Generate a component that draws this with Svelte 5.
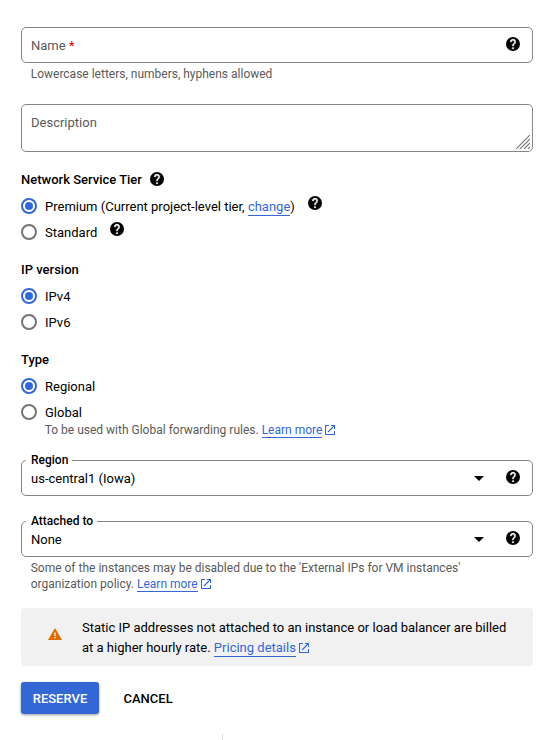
<script>
  let tier = $state('premium');
  let version = $state('IPv4');
  let type = $state('Regional');
</script>

{#snippet help(cls)}
  <svg class="help {cls}" viewBox="2 2 20 20" aria-label="Help">
    <circle cx="12" cy="12" r="10" />
    <path d="M11 17h2v2h-2zM15.070 11.250l-.9.920C13.450 12.900 13 13.500 13 15h-2v-.5c0-1.100.45-2.100 1.170-2.830l1.240-1.260c.37-.36.590-.86.590-1.410 0-1.100-.9-2-2-2s-2 .9-2 2H8c0-2.210 1.790-4 4-4s4 1.790 4 4c0 .88-.36 1.680-.93 2.250z" fill="#fff" stroke="#fff" stroke-width=".5" />
  </svg>
{/snippet}

{#snippet external()}
  <svg class="ext" viewBox="0 0 10 10"><path d="M4 .5H.5v9h9V6M6 .5h3.500V4M9.500.5L3 7" /></svg>
{/snippet}

{#snippet radio(on)}
  <span class="radio" class:on></span>
{/snippet}

<form class="page">
  <div class="box name">
    <span class="placeholder">Name <b>*</b></span>
    {@render help('')}
  </div>
  <div class="hint">Lowercase letters, numbers, hyphens allowed</div>

  <div class="box description">
    <span class="placeholder">Description</span>
    <svg class="grip" viewBox="0 0 14 14"><path d="M0 14L14 0M4 14L14 4M8 14l6-6M12 14l2-2" /></svg>
  </div>

  <section class="first">
    <h3>Network Service Tier {@render help('title-help')}</h3>
    <div class="option">{@render radio(tier === 'premium')}<span>Premium (Current project-level tier, <span class="link">change</span>)</span>{@render help('premium-help')}</div>
    <div class="option">{@render radio(tier === 'standard')}<span>Standard</span>{@render help('standard-help')}</div>
  </section>

  <section>
    <h3>IP version</h3>
    {#each ['IPv4', 'IPv6'] as v}
      <div class="option">{@render radio(version === v)}<span>{v}</span></div>
    {/each}
  </section>

  <section>
    <h3>Type</h3>
    {#each ['Regional', 'Global'] as t}
      <div class="option">{@render radio(type === t)}<span>{t}</span></div>
    {/each}
  </section>
  <div class="hint sub">To be used with Global forwarding rules. <span class="link">Learn more</span>{@render external()}</div>

  <div class="box select region">
    <span class="label">Region</span>
    <span class="value">us-central1 (Iowa)</span>
    <svg class="arrow" viewBox="0 0 10 5"><path d="M0 0h10L5 5z" /></svg>
    {@render help('')}
  </div>

  <div class="box select attached">
    <span class="label">Attached to</span>
    <span class="value">None</span>
    <svg class="arrow" viewBox="0 0 10 5"><path d="M0 0h10L5 5z" /></svg>
    {@render help('')}
  </div>
  <div class="hint policy">Some of the instances may be disabled due to the 'External IPs for VM instances'<br />organization policy. <span class="link">Learn more</span>{@render external()}</div>

  <div class="notice">
    <svg class="warn" viewBox="0 0 14 12"><path d="M7 0l7 12H0z" fill="#e06c00" /><path d="M6.300 4.500h1.400v3.500H6.300zM6.300 9h1.400v1.300H6.300z" fill="#f1f1f1" /></svg>
    <p>Static IP addresses not attached to an instance or load balancer are billed<br />at a higher hourly rate. <span class="link">Pricing details</span>{@render external()}</p>
  </div>

  <div class="actions">
    <button type="button" class="reserve">RESERVE</button>
    <button type="button" class="cancel">CANCEL</button>
  </div>
  <div class="divider"></div>
</form>

<style>
  :global(body) { background: #fff; }
  .page {
    box-sizing: border-box;
    height: 740px;
    padding: 27px 24px 0 21px;
    overflow: hidden;
    display: flex;
    flex-direction: column;
    font: 13px/20px Roboto, sans-serif;
    color: #000;
  }
  .page > * { flex-shrink: 0; }
  .box {
    box-sizing: border-box;
    position: relative;
    height: 36px;
    border: 1px solid #81858e;
    border-radius: 5px;
    padding: 0 12px 0 9px;
    display: flex;
    align-items: center;
    justify-content: space-between;
  }
  .placeholder { color: #5a5a5a; }
  .placeholder b { color: #d50000; font-weight: 400; }
  .name .placeholder, .value { padding-top: 2px; }
  .help { display: block; width: 14px; height: 14px; fill: #000; flex: none; }
  .name .help, .select .help { margin-top: -2px; }
  .hint { font-size: 12px; line-height: 16px; color: #5a5a5a; padding-left: 9.700px; margin-top: 3px; }
  .description { height: 48px; margin-top: 22px; padding-bottom: 10px; }
  .grip { position: absolute; right: 2px; bottom: 2px; width: 14px; height: 14px; stroke: #777; stroke-width: 1.1; fill: none; }
  section { margin-top: 15px; }
  section.first { margin-top: 18px; }
  h3 { display: flex; align-items: center; height: 20px; margin: 0 0 3px; font-size: 13px; font-weight: 500; }
  .title-help { margin: -2px 0 0 8px; }
  .option { display: flex; align-items: center; height: 26px; }
  .option span { line-height: 20px; }
  .option > span:nth-child(2) { padding-top: 2px; }
  .radio {
    box-sizing: border-box;
    width: 16px;
    height: 16px;
    margin-right: 8px;
    border: 2px solid #757575;
    border-radius: 50%;
    display: grid;
    place-items: center;
  }
  .radio.on { border-color: #3367d6; }
  .radio.on::after { content: ''; width: 8px; height: 8px; border-radius: 50%; background: #3367d6; }
  .premium-help { margin: -6px 0 0 13px; }
  .standard-help { margin: -6px 0 0 13px; }
  .link { display: inline-block; color: #3367d6; border-bottom: 1px solid #3367d6; }
  .option .link, .notice .link { line-height: 16px; }
  .hint .link { line-height: 14px; }
  .ext { width: 10px; height: 10px; margin-left: 3px; fill: none; stroke: #3367d6; stroke-width: 1.1; vertical-align: -1px; }
  .sub { padding-left: 23.700px; margin-top: -3px; }
  .region { margin-top: 22px; }
  .attached { margin-top: 25px; }
  .label {
    position: absolute;
    left: 4px;
    top: -9px;
    padding: 0 4px 0 5px;
    background: #fff;
    font-size: 12px;
    line-height: 16px;
    font-weight: 500;
  }
  .arrow { width: 10px; height: 5px; margin-left: auto; margin-right: 22px; }
  .policy { margin-top: 3px; }
  .notice {
    box-sizing: border-box;
    display: flex;
    align-items: center;
    height: 58px;
    margin-top: 16px;
    padding-left: 27px;
    border-radius: 4px;
    background: #f1f1f1;
  }
  .warn { width: 14px; height: 12px; margin: -6px 20px 0 0; }
  .notice p { margin: 2px 0 0; }
  .actions { display: flex; margin-top: 16px; gap: 14.500px; }
  button { height: 32px; border: 0; background: none; padding: 1px 10px 0; font: 500 13px/32px Roboto, sans-serif; color: #000; }
  .reserve { width: 78px; padding: 1px 0 0; color: #fff; background: #3367d6; border-radius: 3px; box-shadow: 0 1px 3px rgba(0, 0, 0, .4); }
  .divider { width: 1px; height: 6px; margin: 20px 0 0 201px; background: #ddd; }
</style>
